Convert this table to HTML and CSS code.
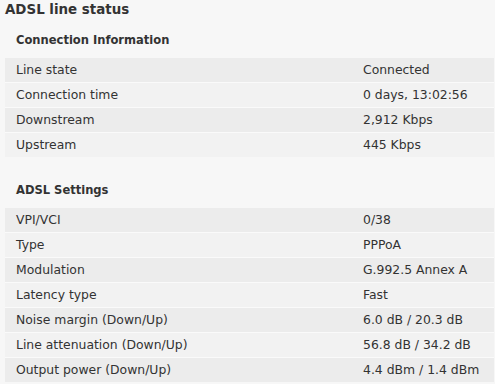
FILE: index.html
```html
<!DOCTYPE html>
<html>
<head>
<meta charset="utf-8">
<link rel="stylesheet" href="styles.css">
</head>
<body>
<h1 class="title">ADSL line status</h1>
<section class="section first">
  <h2 class="section-title">Connection Information</h2>
  <div class="table">
    <div class="row"><span class="label">Line state</span><span class="value">Connected</span></div>
    <div class="row"><span class="label">Connection time</span><span class="value">0 days, 13:02:56</span></div>
    <div class="row"><span class="label">Downstream</span><span class="value">2,912 Kbps</span></div>
    <div class="row"><span class="label">Upstream</span><span class="value">445 Kbps</span></div>
  </div>
</section>
<section class="section">
  <h2 class="section-title">ADSL Settings</h2>
  <div class="table">
    <div class="row"><span class="label">VPI/VCI</span><span class="value">0/38</span></div>
    <div class="row"><span class="label">Type</span><span class="value">PPPoA</span></div>
    <div class="row"><span class="label">Modulation</span><span class="value">G.992.5 Annex A</span></div>
    <div class="row"><span class="label">Latency type</span><span class="value">Fast</span></div>
    <div class="row"><span class="label">Noise margin (Down/Up)</span><span class="value">6.0 dB / 20.3 dB</span></div>
    <div class="row"><span class="label">Line attenuation (Down/Up)</span><span class="value">56.8 dB / 34.2 dB</span></div>
    <div class="row"><span class="label">Output power (Down/Up)</span><span class="value">4.4 dBm / 1.4 dBm</span></div>
  </div>
</section>
</body>
</html>
```

FILE: styles.css
```css
html, body {
  margin: 0;
  padding: 0;
  background: #f7f7f7;
}
body {
  padding: 0 1px 0 5px;
  font-family: "DejaVu Sans", Verdana, sans-serif;
  font-size: 12.4px;
  color: #333333;
}
.title {
  margin: 0;
  font-family: "DejaVu Sans Condensed", "DejaVu Sans", sans-serif;
  font-stretch: condensed;
  font-weight: bold;
  font-size: 14.9px;
  line-height: 18px;
  color: #333333;
}
.section {
  margin-top: 23px;
}
.section.first {
  margin-top: 12px;
}
.section-title {
  margin: 0 0 8px 0;
  padding-left: 11px;
  font-family: "DejaVu Sans Condensed", "DejaVu Sans", sans-serif;
  font-stretch: condensed;
  font-weight: bold;
  font-size: 12.8px;
  line-height: 20px;
  color: #333333;
}
.table {
  display: flex;
  flex-direction: column;
}
.row {
  display: grid;
  grid-template-columns: 347px 1fr;
  height: 24px;
  line-height: 24px;
  padding-left: 11px;
  background: #f2f2f2;
  border-top: 1px solid #fafafa;
}
.row:first-child {
  border-top: none;
}
.row:nth-child(odd) {
  background: #ececec;
}
```
